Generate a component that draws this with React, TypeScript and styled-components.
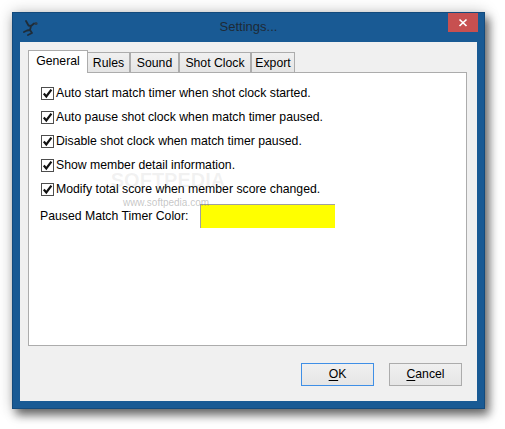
import React from 'react';
import styled, { createGlobalStyle } from 'styled-components';

const GlobalStyle = createGlobalStyle`
  html, body {
    margin: 0;
    padding: 0;
    background: #fff;
    font-family: 'Liberation Sans', Arial, sans-serif;
    overflow: hidden;
  }
`;

const Page = styled.div`
  width: 505px;
  height: 429px;
  padding: 12px 0 0 12px;
  box-sizing: border-box;
`;

const Window = styled.div`
  position: relative;
  width: 473px;
  height: 397px;
  box-sizing: border-box;
  display: flex;
  flex-direction: column;
  background: #195a94;
  border: 1px solid #134a7c;
  box-shadow: 4px 6px 9px rgba(0, 0, 0, 0.55), 0 0 14px rgba(0, 0, 0, 0.22);
`;

const TitleBar = styled.div`
  height: 29px;
  flex: none;
  display: flex;
  align-items: center;
  position: relative;
`;

const AppIcon = styled.svg`
  width: 16px;
  height: 16px;
  margin: 0 0 0 10px;
`;

const Title = styled.div`
  position: absolute;
  left: 0;
  right: 0;
  top: 6px;
  text-align: center;
  font-size: 13px;
  color: #1e2a36;
`;

const CloseButton = styled.div`
  position: absolute;
  right: 6px;
  top: 0;
  width: 30px;
  height: 19px;
  background: #c75050;
  display: flex;
  align-items: center;
  justify-content: center;
`;

const Client = styled.div`
  flex: 1;
  margin: 0 7px 7px;
  background: #f0f0f0;
  padding: 8px 9px 0 8px;
  display: flex;
  flex-direction: column;
`;

const TabStrip = styled.div`
  display: flex;
  align-items: flex-end;
  height: 23px;
  flex: none;
  position: relative;
  z-index: 1;
  margin-bottom: -1px;
`;

const Tab = styled.div<{ $active?: boolean; $w: number }>`
  position: relative;
  z-index: ${({ $active }) => ($active ? 1 : 0)};
  width: ${({ $w }) => $w}px;
  height: ${({ $active }) => ($active ? 23 : 21)}px;
  box-sizing: border-box;
  border: 1px solid #acacac;
  border-bottom: ${({ $active }) => ($active ? 'none' : '1px solid #acacac')};
  background: ${({ $active }) => ($active ? '#fff' : 'linear-gradient(#f0f0f0, #e5e5e5)')};
  font-size: 12.25px;
  line-height: 20px;
  text-align: center;
  color: #000;
  white-space: nowrap;

  &:nth-child(2) {
    margin-left: -1px;
  }
`;

const Panel = styled.div`
  position: relative;
  width: 439px;
  height: 274px;
  box-sizing: border-box;
  background: #fff;
  border: 1px solid #acacac;
  padding: 8px 0 0 12px;
  display: flex;
  flex-direction: column;
`;

const CheckRow = styled.div`
  height: 24px;
  display: flex;
  align-items: center;
  gap: 2px;
  font-size: 12.25px;
  color: #000;
  white-space: nowrap;
`;

const CheckBox = styled.span`
  width: 11px;
  height: 11px;
  flex: none;
  border: 1px solid #4d4d4d;
  background: #fff;
  display: flex;
  align-items: center;
  justify-content: center;
`;

const ColorRow = styled.div`
  display: flex;
  align-items: center;
  margin: 3px 0 0 -1px;
  font-size: 12.25px;
  color: #000;
  height: 24px;
`;

const ColorLabel = styled.span`
  width: 160px;
  flex: none;
  white-space: nowrap;
`;

const ColorSwatch = styled.div`
  width: 135px;
  height: 24px;
  box-sizing: border-box;
  background: #ffff00;
  border-top: 1px solid #a0a0a0;
  border-left: 1px solid #a0a0a0;
`;

const Watermark = styled.div`
  position: absolute;
  left: 74px;
  top: 98px;
  width: 130px;
  text-align: center;
  pointer-events: none;
  white-space: nowrap;
`;

const WatermarkBig = styled.div`
  font-size: 20px;
  font-weight: bold;
  line-height: 18px;
  color: rgba(170, 170, 170, 0.16);
`;

const WatermarkSmall = styled.div`
  font-size: 10px;
  line-height: 11px;
  margin: 8px 0 0 -4px;
  color: rgba(110, 110, 110, 0.4);
`;

const ButtonRow = styled.div`
  display: flex;
  justify-content: flex-end;
  gap: 15px;
  margin-top: 17px;
  padding-right: 6px;
`;

const DialogButton = styled.div<{ $focused?: boolean }>`
  width: 73px;
  height: 23px;
  box-sizing: border-box;
  border: 1px solid ${({ $focused }) => ($focused ? '#3f8fe6' : '#acacac')};
  background: linear-gradient(#f0f0f0, #e5e5e5);
  font-size: 12.25px;
  line-height: 21px;
  text-align: center;
  color: #000;

  & u {
    text-underline-offset: 2px;
  }
`;

const checks = [
  'Auto start match timer when shot clock started.',
  'Auto pause shot clock when match timer paused.',
  'Disable shot clock when match timer paused.',
  'Show member detail information.',
  'Modify total score when member score changed.',
];

const tabs = [
  { label: 'General', w: 60, active: true },
  { label: 'Rules', w: 43 },
  { label: 'Sound', w: 49 },
  { label: 'Shot Clock', w: 72 },
  { label: 'Export', w: 44 },
];

const App: React.FC = () => (
  <Page>
    <GlobalStyle />
    <Window>
      <TitleBar>
        <AppIcon viewBox="0 0 16 16">
          <circle cx="13" cy="3.5" r="1.6" fill="#2a3a48" />
          <path
            d="M3 1 L5.5 5.5 L8 6 L11 3.5 M8 6 L7 10 L9 13 L5 15 M7 10 L4 10.5 L1 12"
            fill="none"
            stroke="#1f2c38"
            strokeWidth="1.8"
            strokeLinecap="round"
            strokeLinejoin="round"
          />
        </AppIcon>
        <Title>Settings...</Title>
        <CloseButton>
          <svg width="10" height="10" viewBox="0 0 10 10">
            <path d="M1.5 1.5 L8.5 8 M8.5 1.5 L1.5 8" stroke="#fff" strokeWidth="1.7" />
          </svg>
        </CloseButton>
      </TitleBar>
      <Client>
        <TabStrip>
          {tabs.map((t) => (
            <Tab key={t.label} $active={t.active} $w={t.w}>
              {t.label}
            </Tab>
          ))}
        </TabStrip>
        <Panel>
          {checks.map((c) => (
            <CheckRow key={c}>
              <CheckBox>
                <svg width="11" height="11" viewBox="0 0 11 11">
                  <path d="M1.8 5.5 L4.3 8.4 L9.4 1.6" fill="none" stroke="#111" strokeWidth="2.2" />
                </svg>
              </CheckBox>
              {c}
            </CheckRow>
          ))}
          <ColorRow>
            <ColorLabel>Paused Match Timer Color:</ColorLabel>
            <ColorSwatch />
          </ColorRow>
          <Watermark>
            <WatermarkBig>SOFTPEDIA</WatermarkBig>
            <WatermarkSmall>www.softpedia.com</WatermarkSmall>
          </Watermark>
        </Panel>
        <ButtonRow>
          <DialogButton $focused>
            <u>O</u>K
          </DialogButton>
          <DialogButton>
            <u>C</u>ancel
          </DialogButton>
        </ButtonRow>
      </Client>
    </Window>
  </Page>
);

export default App;
